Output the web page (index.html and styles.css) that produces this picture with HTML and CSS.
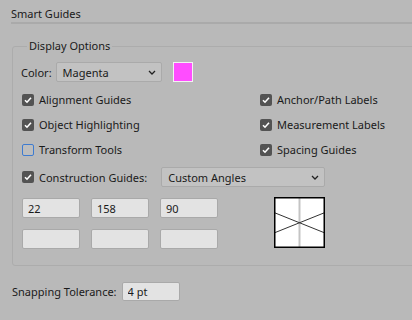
FILE: index.html
```html
<!DOCTYPE html>
<html lang="en">
<head>
  <meta charset="UTF-8">
  <title>Smart Guides</title>
  <link rel="stylesheet" href="styles.css">
</head>
<body>
  <div class="panel">
    <h1 class="section-title">Smart Guides</h1>

    <fieldset class="group">
      <legend>Display Options</legend>

      <div class="color-row">
        <span class="label">Color:</span>
        <div class="select color-select">
          <span>Magenta</span>
          <svg class="chevron" width="8" height="5" viewBox="0 0 8 5"><path d="M1 1l3 3 3-3" fill="none" stroke="#222" stroke-width="1.3"/></svg>
        </div>
        <span class="swatch"></span>
      </div>

      <div class="checks">
        <label class="check-item"><span class="check on"><svg width="10" height="10" viewBox="0 0 10 10"><path d="M2 5.2l2 2 4-4.4" fill="none" stroke="#fff" stroke-width="1.6"/></svg></span>Alignment Guides</label>
        <label class="check-item"><span class="check on"><svg width="10" height="10" viewBox="0 0 10 10"><path d="M2 5.2l2 2 4-4.4" fill="none" stroke="#fff" stroke-width="1.6"/></svg></span>Anchor/Path Labels</label>
        <label class="check-item"><span class="check on"><svg width="10" height="10" viewBox="0 0 10 10"><path d="M2 5.2l2 2 4-4.4" fill="none" stroke="#fff" stroke-width="1.6"/></svg></span>Object Highlighting</label>
        <label class="check-item"><span class="check on"><svg width="10" height="10" viewBox="0 0 10 10"><path d="M2 5.2l2 2 4-4.4" fill="none" stroke="#fff" stroke-width="1.6"/></svg></span>Measurement Labels</label>
        <label class="check-item"><span class="check off"></span>Transform Tools</label>
        <label class="check-item"><span class="check on"><svg width="10" height="10" viewBox="0 0 10 10"><path d="M2 5.2l2 2 4-4.4" fill="none" stroke="#fff" stroke-width="1.6"/></svg></span>Spacing Guides</label>
      </div>

      <div class="construction-row">
        <label class="check-item"><span class="check on"><svg width="10" height="10" viewBox="0 0 10 10"><path d="M2 5.2l2 2 4-4.4" fill="none" stroke="#fff" stroke-width="1.6"/></svg></span>Construction Guides:</label>
        <div class="select angle-select">
          <span>Custom Angles</span>
          <svg class="chevron" width="8" height="5" viewBox="0 0 8 5"><path d="M1 1l3 3 3-3" fill="none" stroke="#222" stroke-width="1.3"/></svg>
        </div>
      </div>

      <div class="angles">
        <input class="field" type="text" value="22">
        <input class="field" type="text" value="158">
        <input class="field" type="text" value="90">
        <div class="preview">
          <svg width="51" height="51" viewBox="0 0 51 51">
            <rect x="0" y="0" width="51" height="51" fill="#fff"/>
            <line x1="25.5" y1="0" x2="25.5" y2="51" stroke="#c4c4c4" stroke-width="2"/>
            <line x1="0" y1="15.5" x2="51" y2="36" stroke="#333" stroke-width="1"/>
            <line x1="0" y1="36" x2="51" y2="15.5" stroke="#333" stroke-width="1"/>
            <rect x="0.75" y="0.75" width="49.5" height="49.5" fill="none" stroke="#000" stroke-width="1.5"/>
          </svg>
        </div>
        <input class="field" type="text" value="">
        <input class="field" type="text" value="">
        <input class="field" type="text" value="">
      </div>
    </fieldset>

    <div class="snap-row">
      <span class="label">Snapping Tolerance:</span>
      <input class="field snap-field" type="text" value="4 pt">
    </div>
  </div>
</body>
</html>
```

FILE: styles.css
```css
body {
  margin: 0;
  background-color: #b9b9b9;
  font-family: "Noto Sans", Arial, sans-serif;
  font-size: 11px;
  color: #1a1a1a;
  overflow: hidden;
}
.panel {
  padding-top: 6px;
}
.section-title {
  margin: 0 0 0 11px;
  font-size: 11px;
  font-weight: normal;
  line-height: 16px;
  padding-bottom: 0;
  border-bottom: 2px solid #aaaaaa;
}
.group {
  margin: 14px -20px 0 12px;
  padding: 8px 0 16px 8px;
  border: 1px solid #acacac;
  border-radius: 3px;
}
.group legend {
  padding: 0 2px;
  margin-left: 6px;
  line-height: 16px;
}
.color-row {
  display: flex;
  align-items: center;
  height: 20px;
}
.label {
  white-space: nowrap;
}
.select {
  display: flex;
  align-items: center;
  justify-content: space-between;
  box-sizing: border-box;
  height: 20px;
  padding: 0 5px 0 6px;
  background-color: #c2c2c2;
  border: 1px solid #aaaaaa;
  border-radius: 2px;
}
.color-select {
  width: 106px;
  margin-left: 4px;
}
.swatch {
  width: 18px;
  height: 18px;
  margin-left: 11px;
  background-color: #ff4dff;
  border: 1px solid #f2f2f2;
}
.checks {
  display: grid;
  grid-template-columns: 238px auto;
  grid-auto-rows: 25px;
  margin-top: 5px;
}
.check-item {
  display: flex;
  align-items: center;
  white-space: nowrap;
}
.check {
  display: flex;
  align-items: center;
  justify-content: center;
  box-sizing: border-box;
  width: 12px;
  height: 12px;
  margin: 0 5px 0 1px;
  border-radius: 2px;
}
.check.on {
  background-color: #535353;
}
.check.off {
  border: 1px solid #3d7bd0;
  background-color: #bdbdbd;
}
.construction-row {
  display: flex;
  align-items: center;
  height: 20px;
  margin-top: 5px;
}
.angle-select {
  width: 164px;
  margin-left: 14px;
}
.angles {
  display: grid;
  grid-template-columns: 58px 58px 58px 51px;
  grid-template-rows: 20px 20px;
  column-gap: 11px;
  row-gap: 11px;
  margin: 11px 0 0 1px;
}
.field {
  box-sizing: border-box;
  width: 100%;
  height: 20px;
  margin: 0;
  padding: 0 5px;
  font-family: inherit;
  font-size: 11px;
  color: #1a1a1a;
  background-color: #e3e3e3;
  border: 1px solid #a9a9a9;
  border-radius: 2px;
  outline: none;
}
.preview {
  grid-column: 4;
  grid-row: 1 / span 2;
  margin-left: 45px;
  margin-top: -1px;
  height: 51px;
}
.preview svg {
  display: block;
}
.snap-row {
  display: flex;
  align-items: center;
  margin: 16px 0 0 12px;
}
.snap-field {
  width: 58px;
  height: 19px;
  margin-left: 5px;
}
```
